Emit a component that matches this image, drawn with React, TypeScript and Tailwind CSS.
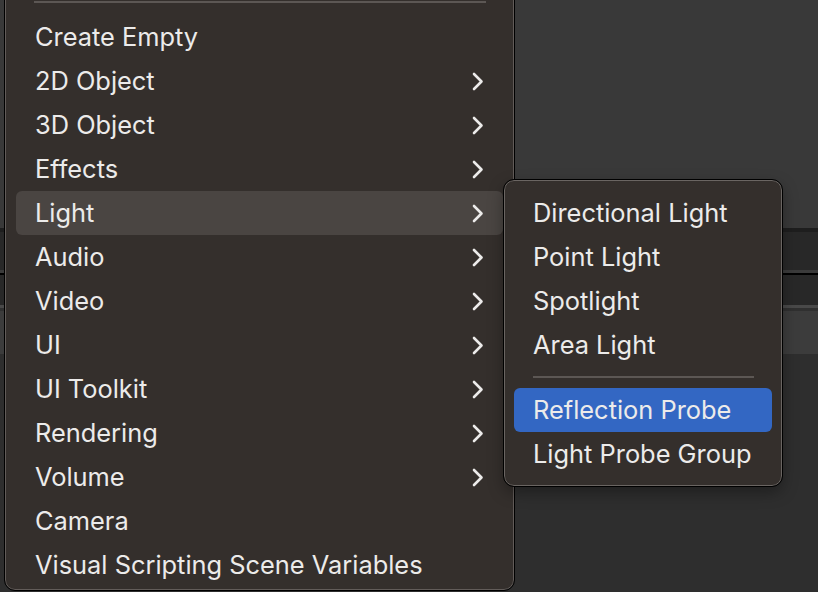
const mainItems: { label: string; sub?: boolean; active?: boolean }[] = [
  { label: "Create Empty" },
  { label: "2D Object", sub: true },
  { label: "3D Object", sub: true },
  { label: "Effects", sub: true },
  { label: "Light", sub: true, active: true },
  { label: "Audio", sub: true },
  { label: "Video", sub: true },
  { label: "UI", sub: true },
  { label: "UI Toolkit", sub: true },
  { label: "Rendering", sub: true },
  { label: "Volume", sub: true },
  { label: "Camera" },
  { label: "Visual Scripting Scene Variables" },
];

const lightItems = ["Directional Light", "Point Light", "Spotlight", "Area Light"];

function Chevron() {
  return (
    <svg width="12" height="19" viewBox="0 0 12 19" fill="none">
      <path d="M2 2L9.5 9.5L2 17" stroke="#ecebea" strokeWidth="2.6" strokeLinecap="round" strokeLinejoin="round" />
    </svg>
  );
}

export default function App() {
  return (
    <div className="relative h-[592px] w-[818px] overflow-hidden bg-[#393939] font-['Inter','Noto_Sans',sans-serif] text-[25.4px] text-[#ecebea]">
      {/* window behind the menus */}
      <div className="flex h-full flex-col">
        <div className="h-[228px] bg-[#393939]" />
        <div className="h-[4px] bg-[#1e1e1e]" />
        <div className="h-[38px] bg-[#282828]" />
        <div className="h-[3px] bg-[#3b3b3b]" />
        <div className="h-[2px] bg-black" />
        <div className="h-[30px] bg-[#282828]" />
        <div className="h-[3px] bg-[#494949]" />
        <div className="h-[3px] bg-[#303030]" />
        <div className="h-[43px] bg-[#3c3c3c]" />
        <div className="flex-1 bg-[#2e2e2e]" />
      </div>

      {/* main menu */}
      <div className="absolute left-[5px] top-[-10px] w-[509px] rounded-b-[10px] border border-[#625c59] bg-[#342f2c] px-[10px] pb-[2px] pt-[10px] outline outline-1 outline-black">
        <div className="mx-[18px] mb-[12px] mr-[17px] h-[2px] bg-[#5c5754]" />
        {mainItems.map((item) => (
          <div
            key={item.label}
            className={`flex h-[44px] items-center justify-between rounded-[6px] pl-[19px] pr-[19px] ${item.active ? "bg-[#4a4542]" : ""}`}
          >
            <span>{item.label}</span>
            {item.sub && <Chevron />}
          </div>
        ))}
      </div>

      {/* Light submenu */}
      <div className="absolute left-[504px] top-[180px] w-[278px] rounded-[10px] border border-[#6a6562] bg-[#342f2c] px-[9px] pb-[9px] pt-[10px] shadow-[0_6px_16px_rgba(0,0,0,0.35)] outline outline-1 outline-black">
        {lightItems.map((label) => (
          <div key={label} className="flex h-[44px] items-center pl-[19px]">
            {label}
          </div>
        ))}
        <div className="ml-[19px] mr-[18px] mb-[10px] mt-[9px] h-[2px] bg-[#5c5754]" />
        <div className="flex h-[44px] items-center rounded-[6px] bg-[#3367c3] pl-[19px]">Reflection Probe</div>
        <div className="flex h-[44px] items-center pl-[19px]">Light Probe Group</div>
      </div>
    </div>
  );
}
